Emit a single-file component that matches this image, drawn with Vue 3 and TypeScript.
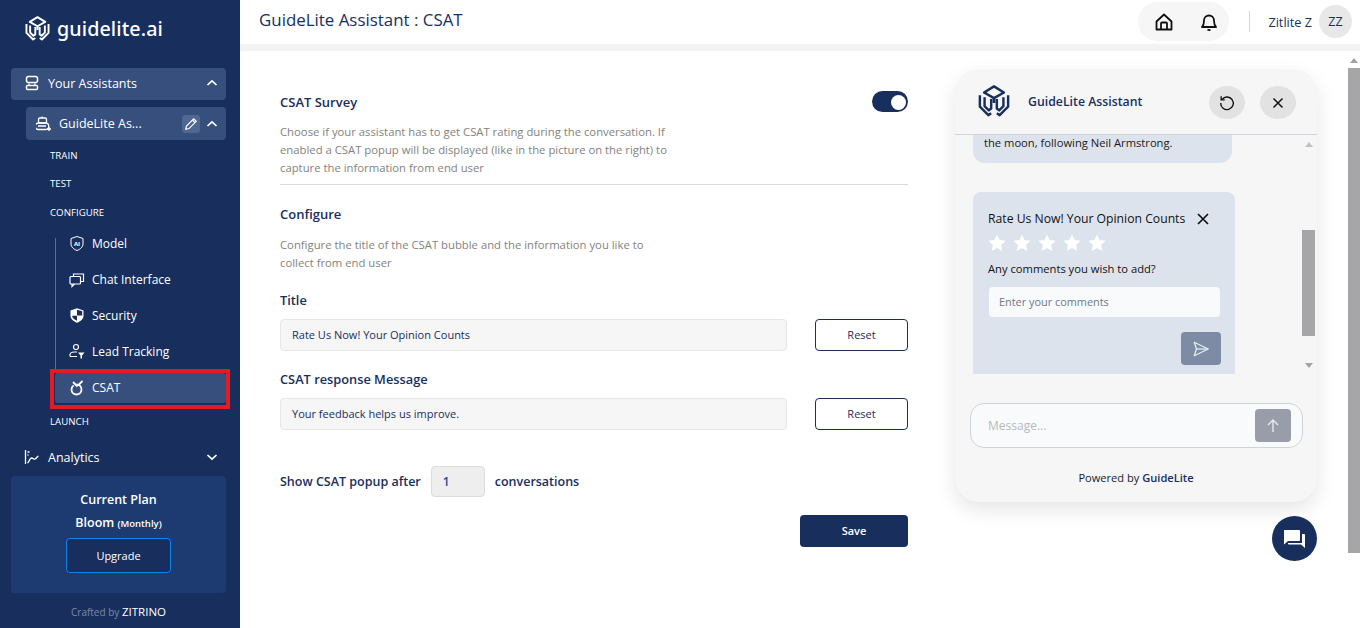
<script setup lang="ts">
const subItems = ["Model", "Chat Interface", "Security", "Lead Tracking"];
const stars = [1, 2, 3, 4, 5];
</script>

<template>
  <div class="page">
    <aside class="side">
      <div class="brand">
        <svg class="brand__logo" viewBox="0 0 34 34" fill="none" stroke="currentColor" stroke-width="2.600" stroke-linejoin="round">
          <path d="M6.500 8 17 1.500 27.500 8 17 14z" />
          <path d="M2 11v12l9 9 3-2M32 11v12l-9 9-3-2" />
          <path d="M7 13v9.500l4.500 4.500 2.500-2V15M27 13v9.500L22.500 27 20 25V15M17 14v5" />
        </svg>
        <span class="brand__name">guidelite.ai</span>
      </div>

      <div class="nav-main nav-main--open">
        <svg class="ico" viewBox="0 0 16 16" fill="none" stroke="currentColor" stroke-width="1.500"><rect x="2.500" y="1.500" width="11" height="6" rx="2" /><rect x="2.500" y="10.500" width="11" height="4" rx="1" /><path d="M5 8.500v2M11 8.500v2" /></svg>
        <span class="nav-main__label">Your Assistants</span>
        <svg class="chev" viewBox="0 0 12 8" fill="none" stroke="currentColor" stroke-width="1.700"><path d="M1.500 6 6 1.800 10.500 6" /></svg>
      </div>

      <div class="nav-bot">
        <svg class="ico ico--bot" viewBox="0 0 16 16" fill="none" stroke="currentColor" stroke-width="1.300"><rect x="2.500" y="2" width="8" height="5" rx="1.500" /><path d="M6 .5V2M2 10h8M2.500 13.500h7a3 3 0 0 0 0-6.500h-7a3 3 0 0 0 0 6.500z" /><path d="M13 11v4M11 13h4" /></svg>
        <span class="nav-bot__label">GuideLite As...</span>
        <span class="nav-bot__edit">
          <svg viewBox="0 0 12 12" fill="none" stroke="currentColor" stroke-width="1"><path d="M1.500 10.500l.6-2.800L8.300 1.500l2.200 2.200-6.200 6.200z" /><path d="M7.200 2.600l2.200 2.200" /></svg>
        </span>
        <svg class="chev" viewBox="0 0 12 8" fill="none" stroke="currentColor" stroke-width="1.700"><path d="M1.500 6 6 1.800 10.500 6" /></svg>
      </div>

      <div class="caps caps--train">TRAIN</div>
      <div class="caps caps--test">TEST</div>
      <div class="caps caps--conf">CONFIGURE</div>

      <div class="tree">
        <div v-for="(item, i) in subItems" :key="item" class="tree__item">
          <svg v-if="i === 0" class="tree__ico" viewBox="0 0 16 16" fill="none" stroke="currentColor" stroke-width="1"><path d="M8 1 14 3v5.500c0 3-3 5.500-6 6.500-3-1-6-3.500-6-6.500V3z" /><text x="8" y="10" class="tree__ai">AI</text></svg>
          <svg v-else-if="i === 1" class="tree__ico" viewBox="0 0 16 16" fill="none" stroke="currentColor" stroke-width="1.200"><rect x="1" y="5" width="10.500" height="7.500" rx="1" /><path d="M3 12.500V15l2.500-2.500M4.500 5V2.500h10V10h-3" /></svg>
          <svg v-else-if="i === 2" class="tree__ico" viewBox="0 0 16 16"><path d="M8 .8 14.500 3v5c0 3.500-3 6-6.500 7.300C4.500 14 1.500 11.500 1.500 8V3z" fill="currentColor" /><path d="M8 2.500V8H3c.2 2.500 2.500 4.200 5 5.300V8h5.200V3.800L8 2.200z" fill="#182f5d" /><path d="M8 2.500V8H3V4z" fill="currentColor" /></svg>
          <svg v-else class="tree__ico" viewBox="0 0 16 16" fill="none" stroke="currentColor" stroke-width="1.200"><circle cx="7" cy="3.500" r="2.500" /><path d="M1 13v-1.500C1 9.500 3 8.500 5 8.500h3M1 13h7" /><path d="M9 9h6.500l-2.500 3v3h-1.500v-3z" fill="currentColor" stroke="none" /></svg>
          <span>{{ item }}</span>
        </div>
      </div>

      <div class="tree__active-mark">
        <div class="tree__active">
          <svg class="tree__ico" viewBox="0 0 16 16" fill="none" stroke="currentColor" stroke-width="1.800"><circle cx="7.500" cy="10" r="5" stroke-dasharray="20 3" /><path d="M4 2.500 8.500 7M13.500 1.500 9 6" /></svg>
          <span>CSAT</span>
        </div>
      </div>

      <div class="caps caps--launch">LAUNCH</div>

      <div class="nav-main nav-main--closed">
        <svg class="ico" viewBox="0 0 16 16" fill="none" stroke="currentColor" stroke-width="1.300"><path d="M1.500 1v14" /><path d="M3.500 14c2-1 2-5 4-5s2 1.500 3.500 1 2-2.500 3.500-3" /><path d="M3.500 3h2M3.500 6h1" /></svg>
        <span class="nav-main__label">Analytics</span>
        <svg class="chev" viewBox="0 0 12 8" fill="none" stroke="currentColor" stroke-width="1.700"><path d="M1.500 2 6 6.200 10.500 2" /></svg>
      </div>

      <div class="plan">
        <div class="plan__head">Current Plan</div>
        <div class="plan__name">Bloom <small>(Monthly)</small></div>
        <div class="plan__btn">Upgrade</div>
      </div>

      <div class="crafted"><span>Crafted by</span> <b>ZITRINO</b></div>
    </aside>

    <div class="right">
      <header class="top">
        <h1 class="top__title">GuideLite Assistant : CSAT</h1>
        <div class="top__tools">
          <div class="top__pill">
            <svg viewBox="0 0 20 20" fill="none" stroke="#111" stroke-width="1.800" stroke-linejoin="round"><path d="M2.500 9.500 10 2.500l7.500 7v8h-15z" /><path d="M7 17.500v-6a1 1 0 0 1 1-1h4a1 1 0 0 1 1 1v6" /></svg>
            <svg viewBox="0 0 20 20" fill="none" stroke="#111" stroke-width="1.800" stroke-linejoin="round"><path d="M3 15c1.500-1.500 2-3 2-6.500a5 5 0 0 1 10 0c0 3.500.5 5 2 6.500z" /><path d="M8.500 18h3" /></svg>
          </div>
          <div class="top__sep"></div>
          <span class="top__user">Zitlite Z</span>
          <span class="top__avatar">ZZ</span>
        </div>
      </header>
      <div class="band"></div>

      <div class="body">
        <main class="form">
          <div class="row-between">
            <h2 class="h">CSAT Survey</h2>
            <span class="toggle"><i></i></span>
          </div>
          <p class="desc desc--survey">Choose if your assistant has to get CSAT rating during the conversation. If enabled a CSAT popup will be displayed (like in the picture on the right) to capture the information from end user</p>
          <hr class="rule" />
          <h2 class="h h--conf">Configure</h2>
          <p class="desc desc--conf">Configure the title of the CSAT bubble and the information you like to collect from end user</p>

          <label class="lbl lbl--title">Title</label>
          <div class="field">
            <div class="field__box">Rate Us Now! Your Opinion Counts</div>
            <div class="btn-reset">Reset</div>
          </div>

          <label class="lbl lbl--msg">CSAT response Message</label>
          <div class="field">
            <div class="field__box">Your feedback helps us improve.</div>
            <div class="btn-reset">Reset</div>
          </div>

          <div class="after">
            <span>Show CSAT popup after</span>
            <span class="after__num">1</span>
            <span>conversations</span>
          </div>

          <div class="save-row"><div class="save">Save</div></div>
        </main>

        <section class="chat-col">
          <div class="chat">
            <div class="chat__head">
              <svg class="chat__logo" viewBox="0 0 34 34" fill="none" stroke="#182f5d" stroke-width="2.600" stroke-linejoin="round">
                <path d="M6.500 8 17 1.500 27.500 8 17 14z" />
                <path d="M2 11v12l9 9 3-2M32 11v12l-9 9-3-2" />
                <path d="M7 13v9.500l4.500 4.500 2.500-2V15M27 13v9.500L22.500 27 20 25V15M17 14v5" />
              </svg>
              <span class="chat__name">GuideLite Assistant</span>
              <span class="round">
                <svg viewBox="0 0 20 20" fill="none" stroke="#111" stroke-width="1.500"><path d="M4.500 6A7 7 0 1 1 3 10" /><path d="M3.500 2.500v4h4" /></svg>
              </span>
              <span class="round round--x">
                <svg viewBox="0 0 20 20" fill="none" stroke="#111" stroke-width="1.600"><path d="M5 5l10 10M15 5 5 15" /></svg>
              </span>
            </div>

            <div class="chat__scroll">
              <div class="msgs">
                <div class="bubble">the moon, following Neil Armstrong.</div>
                <div class="rate">
                  <div class="rate__title">
                    <span>Rate Us Now! Your Opinion Counts</span>
                    <svg viewBox="0 0 14 14" fill="none" stroke="#111" stroke-width="1.700"><path d="M2 2l10 10M12 2 2 12" /></svg>
                  </div>
                  <div class="rate__stars">
                    <svg v-for="s in stars" :key="s" viewBox="0 0 20 20"><path d="M10 1.500l2.600 5.600 6 .7-4.500 4.100 1.200 6L10 15l-5.300 2.900 1.200-6L1.400 7.800l6-.7z" fill="#fff" /></svg>
                  </div>
                  <div class="rate__ask">Any comments you wish to add?</div>
                  <div class="rate__input">Enter your comments</div>
                  <div class="rate__send">
                    <svg viewBox="0 0 20 20" fill="none" stroke="#e9edf3" stroke-width="1.400" stroke-linejoin="round"><path d="M2.500 2.500 18 10 2.500 17.500 5 10z" /><path d="M5 10h13" /></svg>
                  </div>
                </div>
              </div>
              <div class="bar">
                <i class="bar__up"></i>
                <i class="bar__thumb"></i>
                <i class="bar__down"></i>
              </div>
            </div>

            <div class="composer">
              <span>Message...</span>
              <span class="composer__send">
                <svg viewBox="0 0 16 16" fill="none" stroke="#e8eaee" stroke-width="1.400"><path d="M8 14V2.500M3 7l5-5 5 5" /></svg>
              </span>
            </div>
            <div class="powered">Powered by <b>GuideLite</b></div>
          </div>
          <div class="fab-row">
            <span class="fab">
              <svg viewBox="0 0 24 24"><path d="M2 3h15a1 1 0 0 1 1 1v9a1 1 0 0 1-1 1H6l-4 3.500z" fill="#fff" /><path d="M20 7h2a1 1 0 0 1 1 1v13l-4-3.500H7a1 1 0 0 1-1-1V16h14z" fill="#fff" /></svg>
            </span>
          </div>
        </section>

        <div class="page-bar">
          <i class="page-bar__up"></i>
          <i class="page-bar__thumb"></i>
        </div>
      </div>
    </div>
  </div>
</template>

<style>
html,
body {
  margin: 0;
  overflow: hidden;
}
</style>

<style scoped>
.page {
  display: flex;
  width: 1360px;
  height: 628px;
  overflow: hidden;
  background: #fff;
  font-family: "Open Sans", "Noto Sans", sans-serif;
  color: #182f5d;
}

.side {
  width: 240px;
  height: 628px;
  flex: none;
  background: #182f5d;
  color: #fff;
  box-sizing: border-box;
  padding: 0 14px 0 11px;
  display: flex;
  flex-direction: column;
  overflow: hidden;
}

.brand {
  display: flex;
  align-items: center;
  gap: 7px;
  height: 56px;
  margin-bottom: 2px;
  padding: 0 0 0 14px;
  flex: none;
}

.brand__logo {
  width: 25px;
  height: 25px;
  color: #fff;
}

.brand__name {
  font-family: "Noto Sans", sans-serif;
  font-size: 19.700px;
  font-weight: 500;
  letter-spacing: 0.1px;
}

.ico {
  width: 16px;
  height: 16px;
  flex: none;
}

.chev {
  width: 12px;
  height: 8px;
  flex: none;
}

.nav-main {
  display: flex;
  align-items: center;
  height: 32px;
  box-sizing: border-box;
  padding: 0 8px 2px 13px;
  border-radius: 4px;
  font-size: 12.500px;
  flex: none;
}

.nav-main--open {
  margin-top: 10px;
  background: #364f7c;
}

.nav-main__label {
  flex: 1;
  margin-left: 8px;
}

.nav-bot {
  margin: 7px 0 0 15px;
  height: 33px;
  display: flex;
  align-items: center;
  background: #364f7c;
  border-radius: 4px;
  padding: 0 8px 0 10px;
  font-size: 12.500px;
  flex: none;
}

.nav-bot__label {
  flex: 1;
  margin-left: 7px;
  white-space: nowrap;
}

.nav-bot__edit {
  width: 18px;
  height: 18px;
  border-radius: 3px;
  background: #4f6891;
  margin-right: 6px;
  display: flex;
  align-items: center;
  justify-content: center;
}

.nav-bot__edit svg {
  width: 14px;
  height: 14px;
}

.caps {
  font-size: 9.700px;
  line-height: 14px;
  padding-left: 39px;
  flex: none;
}

.caps--train {
  margin-top: 9px;
}

.caps--test {
  margin-top: 14px;
}

.caps--conf {
  margin-top: 15px;
}

.caps--launch {
  margin-top: 6px;
}

.tree {
  margin: 6px 0 0 44px;
  flex: none;
  height: 144px;
  position: relative;
}

.tree::before {
  content: "";
  position: absolute;
  left: 0;
  top: 12px;
  bottom: 0;
  width: 1px;
  background: #5d6f92;
}

.tree__item,
.tree__active {
  display: flex;
  align-items: center;
  gap: 7px;
  height: 36px;
  box-sizing: border-box;
  padding: 0 0 2px 14px;
  font-size: 12px;
}

.tree__ico {
  width: 16px;
  height: 17px;
  flex: none;
}

.tree__ai {
  font-size: 6px;
  font-weight: 700;
  text-anchor: middle;
  fill: currentColor;
  stroke: none;
}

.tree__active-mark {
  flex: none;
  box-sizing: border-box;
  margin: -1px -4px 0 39px;
  width: 180px;
  height: 40px;
  border: 4px solid #e21c21;
  padding: 0 0 0 1px;
  position: relative;
}

.tree__active {
  height: 30px;
  background: #364f7c;
  border-radius: 3px;
}

.nav-main--closed {
  margin-top: 13px;
}

.plan {
  margin-top: 2px;
  height: 117px;
  flex: none;
  background: #1d3b70;
  border-radius: 4px;
  display: flex;
  flex-direction: column;
  align-items: center;
  box-sizing: border-box;
  padding-top: 15px;
}

.plan__head {
  font-size: 12.500px;
  font-weight: 600;
  line-height: 17px;
}

.plan__name {
  font-size: 12.500px;
  font-weight: 600;
  line-height: 17px;
  margin-top: 6px;
}

.plan__name small {
  font-size: 9.500px;
}

.plan__btn {
  margin-top: 6px;
  width: 105px;
  height: 35px;
  box-sizing: border-box;
  border: 1px solid #0d84ea;
  border-radius: 4px;
  background: #182f5d;
  display: flex;
  align-items: center;
  justify-content: center;
  font-size: 11px;
  font-weight: 500;
}

.crafted {
  margin-top: 11px;
  text-align: center;
  font-size: 10px;
  line-height: 16px;
}

.crafted span {
  color: #7d8aa5;
}

.crafted b {
  font-weight: 500;
  font-size: 11.500px;
  color: #fff;
}

.right {
  flex: 1;
  min-width: 0;
  display: flex;
  flex-direction: column;
}

.top {
  height: 44px;
  flex: none;
  display: flex;
  align-items: center;
  justify-content: space-between;
  padding: 0 8px 0 19px;
}

.top__title {
  margin: 0 0 6px;
  font-size: 16.900px;
  font-weight: 500;
  color: #182f5d;
}

.top__tools {
  display: flex;
  align-items: center;
  margin-bottom: 1px;
}

.top__pill {
  width: 91px;
  height: 39px;
  box-sizing: border-box;
  border-radius: 20px;
  background: #f6f6f6;
  display: flex;
  align-items: center;
  justify-content: space-between;
  padding: 0 10px 0 16px;
}

.top__pill svg {
  width: 20px;
  height: 20px;
}

.top__sep {
  width: 1px;
  height: 21px;
  background: #d7d7d7;
  margin: 0 18px 0 20px;
}

.top__user {
  font-size: 12.700px;
  font-weight: 500;
}

.top__avatar {
  width: 33px;
  height: 33px;
  border-radius: 50%;
  background: #e8e8e8;
  margin-left: 7px;
  display: flex;
  align-items: center;
  justify-content: center;
  font-size: 12.500px;
}

.band {
  height: 7px;
  background: #f3f3f3;
  flex: none;
}

.body {
  flex: 1;
  min-height: 0;
  display: flex;
}

.form {
  width: 628px;
  margin-left: 40px;
  flex: none;
  display: flex;
  flex-direction: column;
  padding-top: 42px;
  box-sizing: border-box;
}

.row-between {
  display: flex;
  align-items: center;
  justify-content: space-between;
  height: 20px;
}

.h {
  margin: 0 0 2px;
  font-size: 13px;
  font-weight: 600;
  line-height: 18px;
  color: #182f5d;
}

.toggle {
  width: 36px;
  height: 21px;
  margin-bottom: 3px;
  border-radius: 11px;
  background: #182f5d;
  display: block;
  position: relative;
}

.toggle i {
  position: absolute;
  right: 2px;
  top: 4px;
  width: 15px;
  height: 15px;
  border-radius: 50%;
  background: #fff;
}

.desc {
  margin: 0;
  max-width: 395px;
  font-size: 11.300px;
  line-height: 18px;
  color: #84827d;
}

.desc--survey {
  margin-top: 10px;
}

.rule {
  width: 100%;
  margin: 7px 0 0;
  border: 0;
  border-top: 1px solid #d9d9d9;
}

.h--conf {
  margin-top: 20px;
}

.desc--conf {
  margin-top: 11px;
}

.lbl {
  display: block;
  margin-bottom: 2px;
  font-size: 12.800px;
  font-weight: 600;
  line-height: 16px;
  color: #182f5d;
}

.lbl--title {
  margin-top: 20px;
}

.lbl--msg {
  margin-top: 20px;
}

.field {
  margin-top: 9px;
  display: flex;
  justify-content: space-between;
  align-items: center;
}

.field__box {
  width: 507px;
  height: 32px;
  box-sizing: border-box;
  border: 1px solid #e7e7e7;
  border-radius: 4px;
  background: #f6f6f6;
  display: flex;
  align-items: center;
  padding: 0 0 2px 11px;
  font-size: 11px;
  color: #182f5d;
}

.btn-reset {
  width: 93px;
  height: 32px;
  box-sizing: border-box;
  border: 1px solid #182f5d;
  border-radius: 4px;
  display: flex;
  align-items: center;
  justify-content: center;
  padding-bottom: 2px;
  font-size: 11px;
}

.after {
  margin-top: 36px;
  display: flex;
  align-items: center;
  gap: 10px;
  font-size: 12.500px;
  font-weight: 600;
}

.after__num {
  width: 54px;
  height: 31px;
  box-sizing: border-box;
  border: 1px solid #dcdcdc;
  border-radius: 4px;
  background: #eee;
  display: flex;
  align-items: center;
  padding-left: 11px;
  font-size: 12px;
  color: #1d4a9a;
}

.save-row {
  display: flex;
  justify-content: flex-end;
  margin-top: 18px;
}

.save {
  width: 108px;
  height: 32px;
  box-sizing: border-box;
  padding-bottom: 2px;
  border-radius: 4px;
  background: #182f5d;
  color: #fff;
  display: flex;
  align-items: center;
  justify-content: center;
  font-size: 11px;
  font-weight: 600;
}

.chat-col {
  width: 362px;
  margin: 18px 0 0 47px;
  flex: none;
}

.chat {
  height: 433px;
  box-sizing: border-box;
  border-radius: 24px;
  background: #f6f6f6;
  box-shadow: 0 8px 20px rgba(0, 0, 0, 0.1);
  display: flex;
  flex-direction: column;
  overflow: hidden;
}

.chat__head {
  height: 66px;
  flex: none;
  box-sizing: border-box;
  border-bottom: 1px solid #d4d4dc;
  display: flex;
  align-items: center;
  padding: 0 21px 0 23px;
}

.chat__logo {
  width: 32px;
  height: 32px;
  flex: none;
  margin-bottom: 2px;
}

.chat__name {
  flex: 1;
  margin-left: 18px;
  font-size: 12.300px;
  font-weight: 600;
  color: #182f5d;
}

.round {
  width: 36px;
  height: 33px;
  margin-top: 2px;
  border-radius: 50%;
  background: #e2e2e2;
  display: flex;
  align-items: center;
  justify-content: center;
}

.round--x {
  margin-left: 15px;
}

.round svg {
  width: 18px;
  height: 18px;
}

.chat__scroll {
  height: 244px;
  flex: none;
  display: flex;
  overflow: hidden;
}

.msgs {
  flex: 1;
  padding: 0 0 0 18px;
}

.bubble {
  width: 259px;
  height: 28px;
  box-sizing: border-box;
  background: #dde3ec;
  border-radius: 0 0 12px 12px;
  padding-left: 11px;
  font-size: 11.200px;
  line-height: 16px;
  color: #1a1a1a;
}

.rate {
  margin-top: 29px;
  width: 262px;
  height: 182px;
  box-sizing: border-box;
  background: #dde3ec;
  border-radius: 8px 8px 0 0;
  padding: 18px 15px 0;
  color: #111;
}

.rate__title {
  display: flex;
  align-items: center;
  gap: 11px;
  font-size: 12.200px;
  line-height: 17px;
  white-space: nowrap;
}

.rate__title svg {
  width: 14px;
  height: 14px;
  flex: none;
}

.rate__stars {
  display: flex;
  gap: 5px;
  margin: 6px 0 0 -1px;
}

.rate__stars svg {
  width: 20px;
  height: 20px;
}

.rate__ask {
  margin-top: 7px;
  font-size: 11.200px;
  line-height: 17px;
}

.rate__input {
  margin: 10px 0 0 1px;
  width: 231px;
  height: 30px;
  box-sizing: border-box;
  border-radius: 4px;
  background: #f9fafc;
  padding: 0 0 2px 10px;
  display: flex;
  align-items: center;
  font-size: 10.900px;
  color: #6f7785;
}

.rate__send {
  margin: 15px 0 0 193px;
  width: 40px;
  height: 33px;
  border-radius: 4px;
  background: #7d8ba5;
  display: flex;
  align-items: center;
  justify-content: center;
}

.rate__send svg {
  width: 18px;
  height: 18px;
}

.bar {
  width: 13px;
  margin-right: 2px;
  flex: none;
  display: flex;
  flex-direction: column;
  align-items: center;
}

.bar__up {
  margin-top: 7px;
  border: 4px solid transparent;
  border-top: 0;
  border-bottom: 5px solid #c2c2c2;
}

.bar__thumb {
  margin-top: 83px;
  width: 13px;
  height: 106px;
  background: #a6a6a9;
}

.bar__down {
  margin-top: 27px;
  border: 4px solid transparent;
  border-bottom: 0;
  border-top: 5px solid #a3a3a3;
}

.composer {
  margin: 24px 14px 0 15px;
  height: 45px;
  flex: none;
  box-sizing: border-box;
  border: 1px solid #cfd2da;
  border-radius: 14px;
  background: #f9fafc;
  display: flex;
  align-items: center;
  justify-content: space-between;
  padding: 0 11px 0 17px;
  font-size: 12px;
  color: #b9b9b9;
}

.composer__send {
  width: 36px;
  height: 33px;
  border-radius: 4px;
  background: #989da9;
  display: flex;
  align-items: center;
  justify-content: center;
}

.composer__send svg {
  width: 16px;
  height: 16px;
}

.powered {
  margin-top: 22px;
  text-align: center;
  font-size: 11.100px;
  line-height: 16px;
  color: #1a1a2a;
}

.powered b {
  color: #182f5d;
  font-weight: 600;
}

.fab-row {
  margin-top: 14px;
  display: flex;
  justify-content: flex-end;
}

.fab {
  width: 45px;
  height: 45px;
  border-radius: 50%;
  background: #182f5d;
  display: flex;
  align-items: center;
  justify-content: center;
}

.fab svg {
  width: 24px;
  height: 24px;
  margin-left: -1px;
}

.page-bar {
  width: 12px;
  margin-left: 31px;
  flex: none;
  display: flex;
  flex-direction: column;
  align-items: center;
}

.page-bar__up {
  margin-top: 7px;
  border: 4px solid transparent;
  border-top: 0;
  border-bottom: 5px solid #a3a3a3;
}

.page-bar__thumb {
  margin-top: 5px;
  width: 12px;
  height: 485px;
  background: #a6a6a9;
}
</style>
